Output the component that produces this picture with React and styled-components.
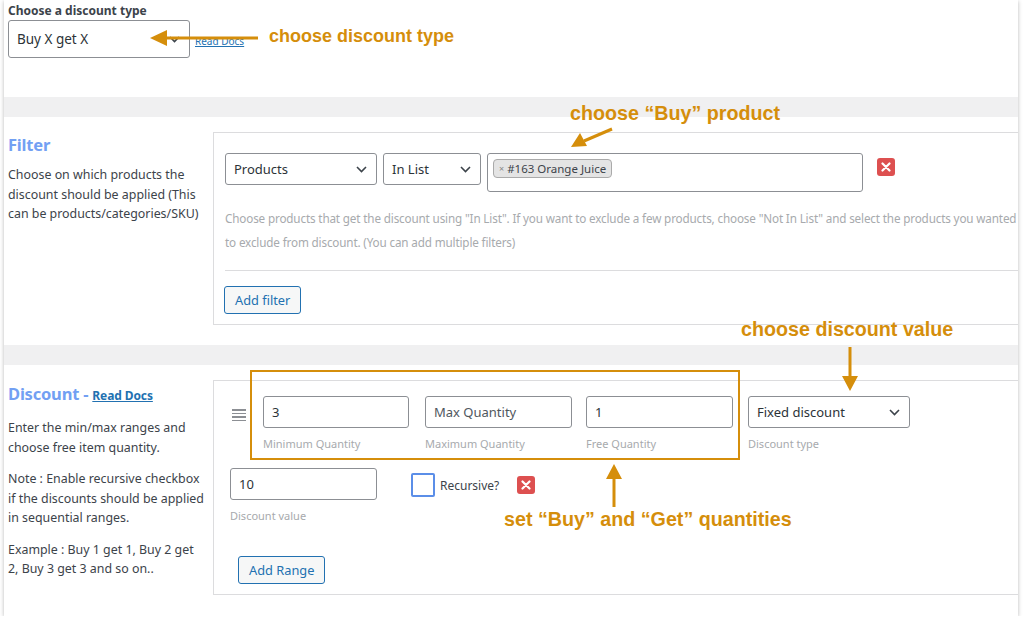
import React from 'react';
import styled, { createGlobalStyle } from 'styled-components';

const Global = createGlobalStyle`
body {
  margin: 0;
  background: #fff;
  font-family: "Noto Sans", "Open Sans", sans-serif;
  color: #3c434a;
}
`;

const ORANGE = '#d58e0b';

const Card = styled.div`
position: relative;
width: 1014px;
margin-left: 4px;
background: #fff;
box-shadow: 0 1px 4px rgba(0,0,0,0.28);
overflow: hidden;
`;

const Top = styled.div`
height: 97px;
box-sizing: border-box;
padding: 3px 0 0 4px;
`;

const TopLabel = styled.div`
font-size: 12px;
font-weight: 700;
color: #3c434a;
line-height: 16px;
`;

const TopRow = styled.div`
display: flex;
align-items: flex-end;
gap: 5px;
margin-top: 1px;
`;

const Band = styled.div`
height: 20px;
background: #f0f0f1;
`;

const Section = styled.div`
display: grid;
grid-template-columns: 209px 1fr;
padding: ${p => p.pad};
`;

const Side = styled.div`
padding-left: 4px;
`;

const Heading = styled.div`
font-size: 16.5px;
font-weight: 700;
color: #72a0f3;
line-height: 20px;
margin-top: ${p => p.top || 0}px;
display: flex;
align-items: baseline;
gap: 4px;
letter-spacing: -0.2px;
`;

const HeadLink = styled.a`
font-size: 12px;
font-weight: 700;
color: #2271b1;
text-decoration: underline;
letter-spacing: -0.1px;
`;

const SideText = styled.p`
margin: ${p => p.top ?? 12}px 0 0;
font-size: 12.4px;
line-height: 19.5px;
color: #3c434a;
white-space: nowrap;
`;

const Box = styled.div`
border: 1px solid #dcdcde;
border-right: none;
padding: ${p => p.pad};
`;

const Row = styled.div`
display: flex;
align-items: flex-start;
gap: ${p => p.gap ?? 6}px;
`;

const SelectBox = styled.div`
width: ${p => p.w}px;
height: ${p => p.h || 32}px;
box-sizing: border-box;
border: 1px solid #8c8f94;
border-radius: 3px;
display: flex;
align-items: center;
justify-content: space-between;
padding: 0 9px 0 8px;
font-size: ${p => p.fs || 13}px;
color: #2c3338;
background: #fff;
`;

const TagBox = styled.div`
width: 376px;
height: 39px;
box-sizing: border-box;
border: 1px solid #8c8f94;
border-radius: 3px;
padding: 5px;
display: flex;
align-items: flex-start;
`;

const Tag = styled.span`
display: inline-flex;
align-items: center;
gap: 3px;
height: 19px;
box-sizing: border-box;
padding: 0 5px;
background: #e4e4e4;
border: 1px solid #aaa;
border-radius: 4px;
font-size: 11.5px;
color: #3c434a;
`;

const TagX = styled.span`
font-size: 9px;
color: #888;
`;

const RemoveBtn = styled.div`
width: 18px;
height: 18px;
margin: ${p => p.m};
border-radius: 3px;
background: #dd5050;
display: flex;
align-items: center;
justify-content: center;
flex: none;
`;

const Help = styled.div`
margin-top: 14px;
font-size: 11.7px;
line-height: 24px;
color: #a7aaad;
white-space: nowrap;
letter-spacing: -0.15px;
`;

const Divider = styled.div`
margin-top: 16px;
border-top: 1px solid #dcdcde;
`;

const Button = styled.button`
display: block;
margin: ${p => p.m};
height: 28px;
padding: 0 10px;
font-family: inherit;
font-size: 12.8px;
color: #2271b1;
background: #f6f7f7;
border: 1px solid #2271b1;
border-radius: 3px;
`;

const Field = styled.div`
display: flex;
flex-direction: column;
margin-left: ${p => p.ml || 0}px;
`;

const Input = styled.div`
width: ${p => p.w || 147}px;
height: 32px;
box-sizing: border-box;
border: 1px solid #8c8f94;
border-radius: 3px;
padding: 0 8px;
display: flex;
align-items: center;
font-size: 13px;
color: ${p => (p.$muted ? '#50575e' : '#2c3338')};
`;

const FieldLabel = styled.div`
margin-top: 8px;
font-size: 11px;
line-height: 16px;
color: #a7aaad;
`;

const Handle = styled.div`
width: 14px;
margin: 13px 1px 0 2px;
display: flex;
flex-direction: column;
gap: 2px;
span { height: 1.5px; background: #8c8f94; display: block; }
`;

const Check = styled.div`
width: 24px;
height: 24px;
box-sizing: border-box;
border: 2px solid #5b8ee8;
border-radius: 2px;
margin: 5px 5px 0 34px;
`;

const CheckText = styled.div`
font-size: 12px;
color: #3c434a;
margin-top: 9px;
`;

const ReadDocs = styled.a`
font-size: 10px;
color: #2271b1;
text-decoration: underline;
margin-bottom: 10px;
`;

const Note = styled.div`
position: absolute;
left: ${p => p.x}px;
top: ${p => p.y}px;
font-family: "Liberation Sans", Arial, sans-serif;
font-weight: 700;
font-size: ${p => p.fs || 19.7}px;
color: ${ORANGE};
white-space: nowrap;
`;

const Overlay = styled.svg`
position: absolute;
left: 0;
top: 0;
pointer-events: none;
`;

const Frame = styled.div`
position: absolute;
left: 246px;
top: 370px;
width: 490px;
height: 90px;
box-sizing: border-box;
border: 2px solid ${ORANGE};
`;

const Chevron = () => (
  <svg width="11" height="7" viewBox="0 0 11 7">
    <path d="M1 1l4.5 4.5L10 1" fill="none" stroke="#3c434a" strokeWidth="1.6" />
  </svg>
);

const Cross = () => (
  <svg width="10" height="10" viewBox="0 0 10 10">
    <path d="M1.5 1.5l7 7M8.5 1.5l-7 7" stroke="#fff" strokeWidth="2.2" strokeLinecap="round" />
  </svg>
);

export default function App() {
  return (
    <>
      <Global />
      <Card>
        <Top>
          <TopLabel>Choose a discount type</TopLabel>
          <TopRow>
            <SelectBox w={182} h={38} fs={13.5}>
              <span>Buy X get X</span>
              <Chevron />
            </SelectBox>
            <ReadDocs>Read Docs</ReadDocs>
          </TopRow>
        </Top>
        <Band />
        <Section pad="15px 0 20px">
          <Side>
            <Heading top={3}>Filter</Heading>
            <SideText top={10}>
              Choose on which products the<br />
              discount should be applied (This<br />
              can be products/categories/SKU)
            </SideText>
          </Side>
          <Box pad="20px 0 10px 11px">
            <Row>
              <SelectBox w={152}>
                <span>Products</span>
                <Chevron />
              </SelectBox>
              <SelectBox w={98}>
                <span>In List</span>
                <Chevron />
              </SelectBox>
              <TagBox>
                <Tag><TagX>×</TagX>#163 Orange Juice</Tag>
              </TagBox>
              <RemoveBtn m="5px 0 0 8px"><Cross /></RemoveBtn>
            </Row>
            <Help>
              <div>Choose products that get the discount using "In List". If you want to exclude a few products, choose "Not In List" and select the products you wanted</div>
              <div>to exclude from discount. (You can add multiple filters)</div>
            </Help>
            <Divider />
            <Button m="15px 0 0 -1px">Add filter</Button>
          </Box>
        </Section>
        <Band />
        <Section pad="15px 0 21px">
          <Side>
            <Heading top={4}>
              Discount -<HeadLink>Read Docs</HeadLink>
            </Heading>
            <SideText top={12}>
              Enter the min/max ranges and<br />
              choose free item quantity.
            </SideText>
            <SideText>
              Note : Enable recursive checkbox<br />
              if the discounts should be applied<br />
              in sequential ranges.
            </SideText>
            <SideText>
              Example : Buy 1 get 1, Buy 2 get<br />
              2, Buy 3 get 3 and so on..
            </SideText>
          </Side>
          <Box pad="15px 0 10px 16px">
            <Row gap={16}>
              <Handle><span /><span /><span /><span /></Handle>
              <Field>
                <Input w={146}>3</Input>
                <FieldLabel>Minimum Quantity</FieldLabel>
              </Field>
              <Field>
                <Input $muted>Max Quantity</Input>
                <FieldLabel>Maximum Quantity</FieldLabel>
              </Field>
              <Field ml={-2}>
                <Input>1</Input>
                <FieldLabel>Free Quantity</FieldLabel>
              </Field>
              <Field ml={-1}>
                <SelectBox w={162}>
                  <span>Fixed discount</span>
                  <Chevron />
                </SelectBox>
                <FieldLabel>Discount type</FieldLabel>
              </Field>
            </Row>
            <Row gap={0} style={{ marginTop: 16 }}>
              <Field>
                <Input>10</Input>
                <FieldLabel>Discount value</FieldLabel>
              </Field>
              <Check />
              <CheckText>Recursive?</CheckText>
              <RemoveBtn m="8px 0 0 18px"><Cross /></RemoveBtn>
            </Row>
            <Button m="32px 0 0 8px">Add Range</Button>
          </Box>
        </Section>

        <Frame />
        <Note x={265} y={26} fs={18}>choose discount type</Note>
        <Note x={566} y={102}>choose “Buy” product</Note>
        <Note x={737} y={318}>choose discount value</Note>
        <Note x={500} y={508}>set “Buy” and “Get” quantities</Note>
        <Overlay width="1014" height="623">
          <line x1="254" y1="38" x2="158" y2="38" stroke={ORANGE} strokeWidth="3" />
          <path d="M146 38l17-8v16z" fill={ORANGE} />
          <line x1="608" y1="129" x2="580" y2="141" stroke={ORANGE} strokeWidth="3" />
          <path d="M567 147l9-14 7 13z" fill={ORANGE} />
          <line x1="846" y1="347" x2="846" y2="378" stroke={ORANGE} strokeWidth="3" />
          <path d="M846 391l-8-15h16z" fill={ORANGE} />
          <line x1="610" y1="507" x2="610" y2="478" stroke={ORANGE} strokeWidth="3" />
          <path d="M610 464l-8 15h16z" fill={ORANGE} />
        </Overlay>
      </Card>
    </>
  );
}
